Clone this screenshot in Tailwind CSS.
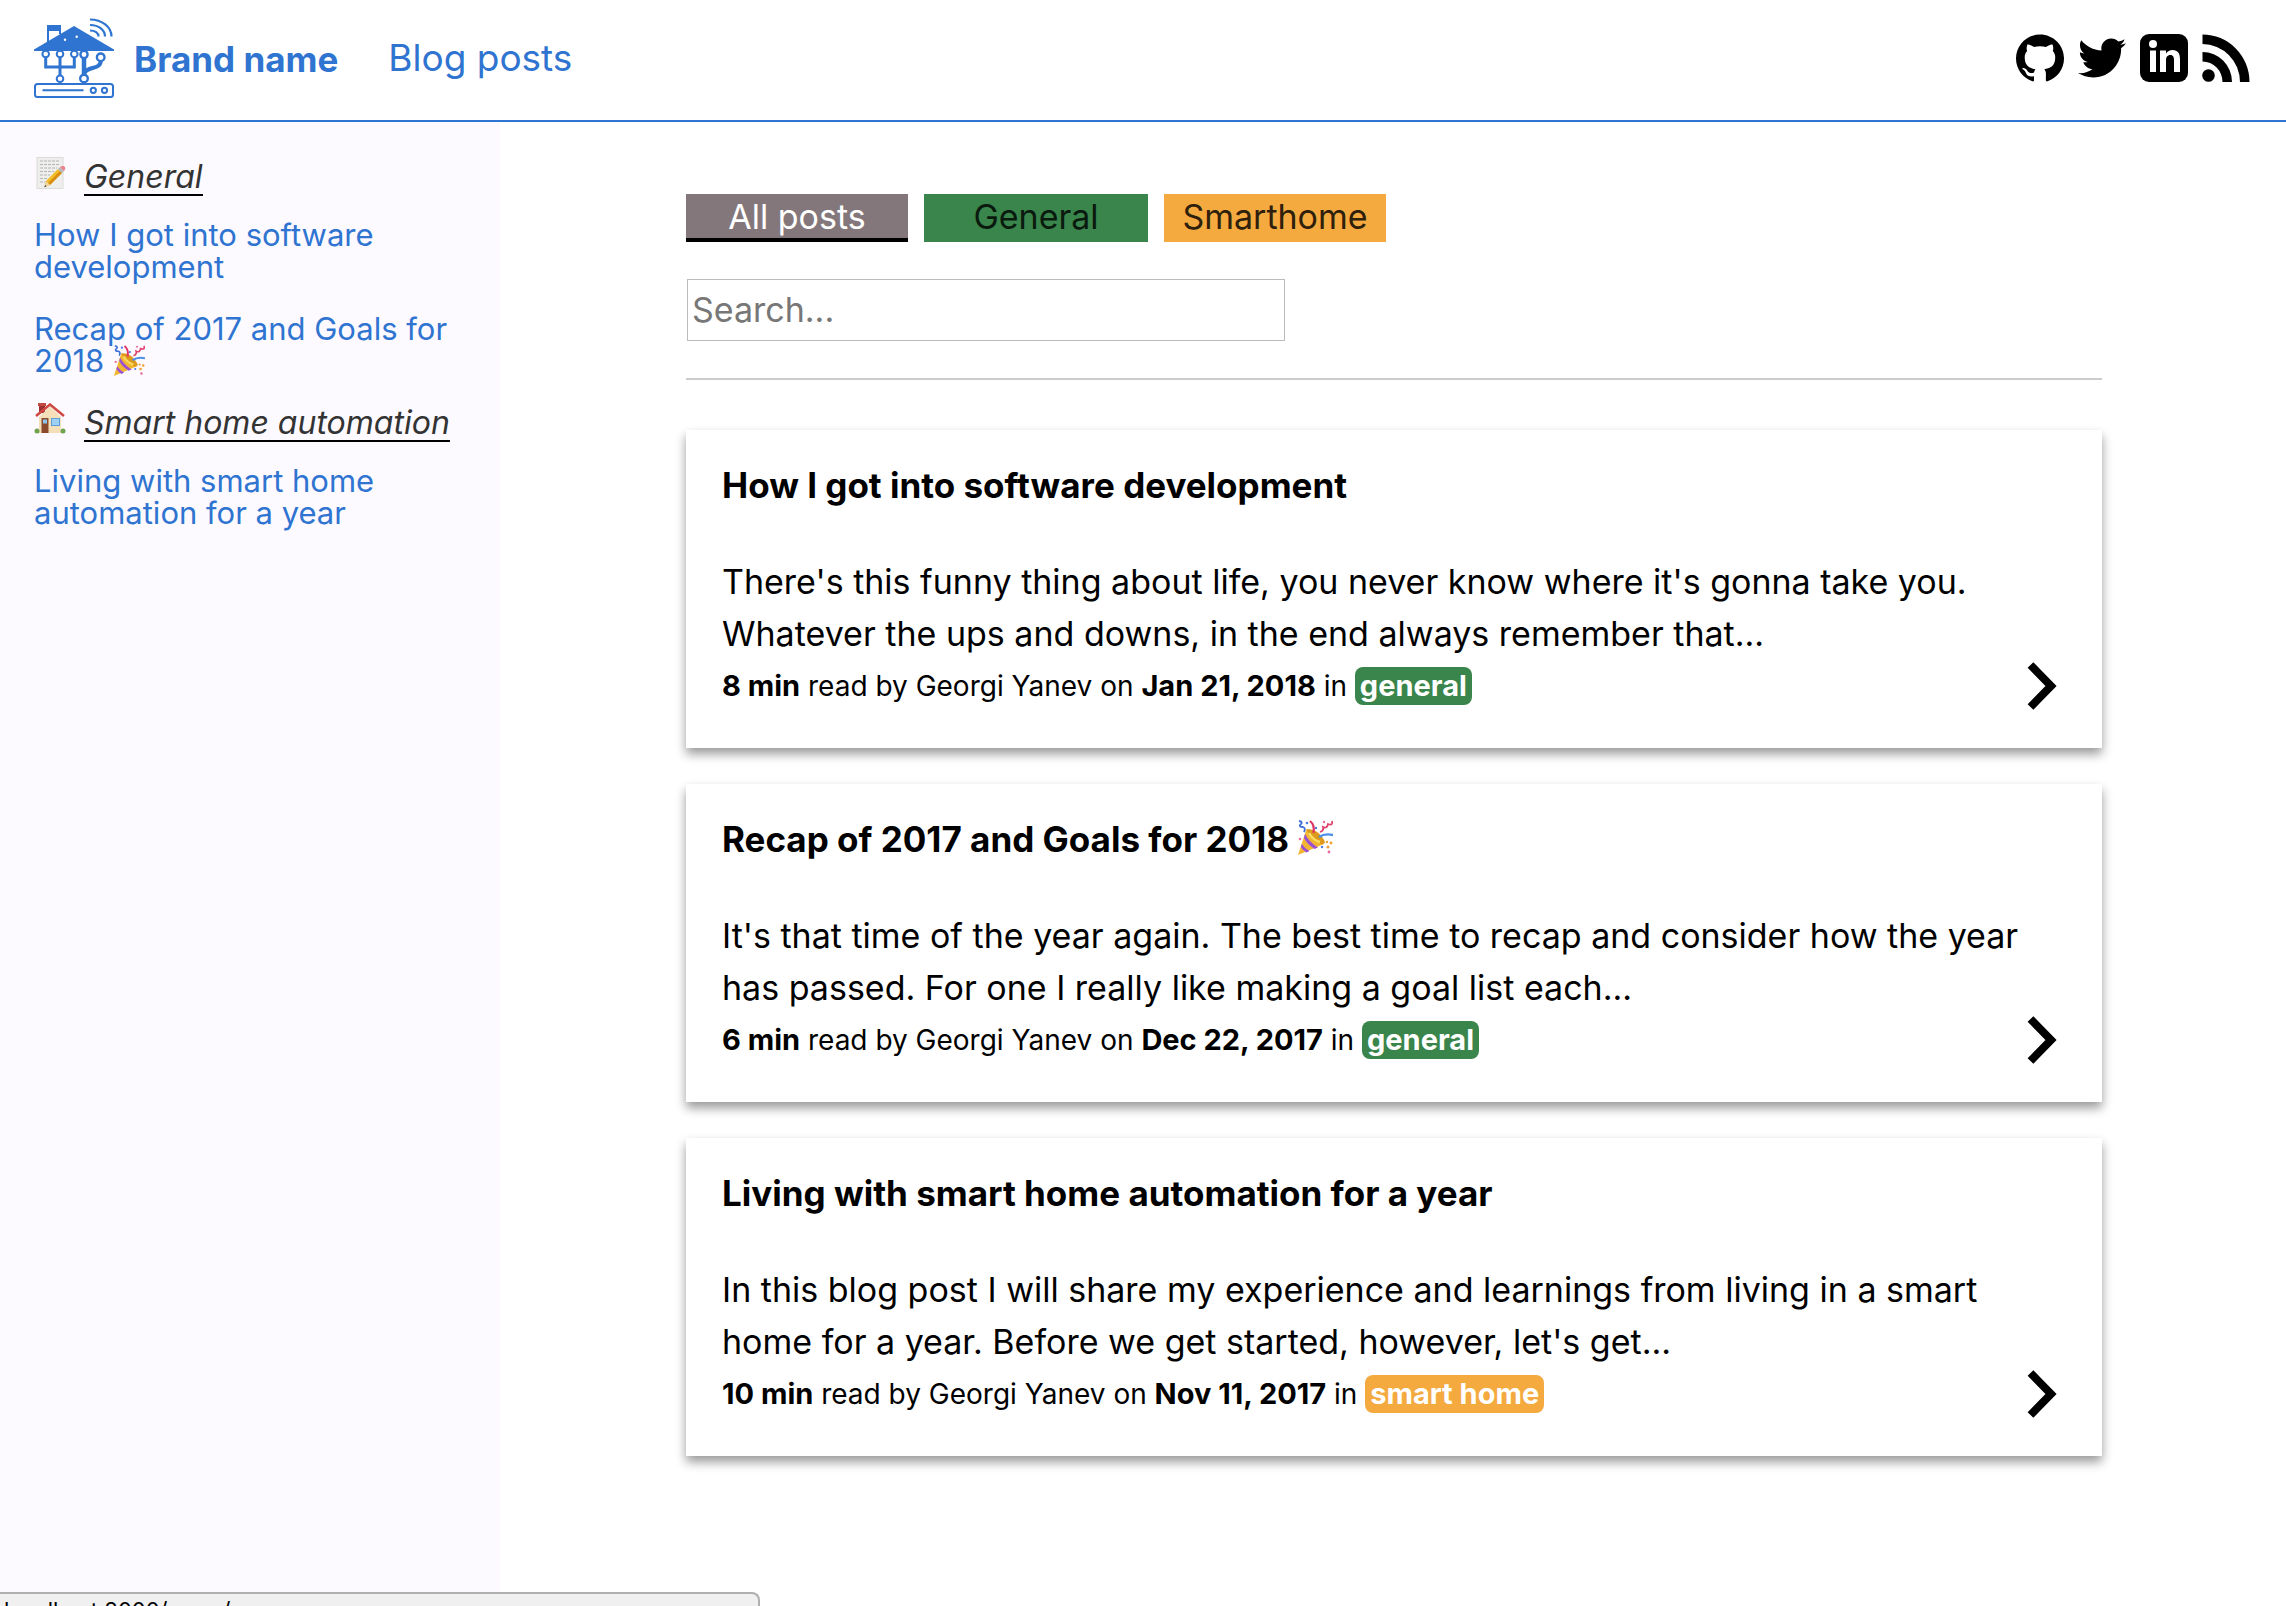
<!DOCTYPE html>
<html lang="en">
<head>
<meta charset="utf-8">
<meta name="viewport" content="width=device-width, initial-scale=1">
<title>Blog posts</title>
<script src="https://cdn.jsdelivr.net/npm/@tailwindcss/browser@4"></script>
</head>
<body class="flex min-h-screen flex-col bg-white font-[Inter,sans-serif] text-black">

<!-- Shared drawings -->
<svg class="hidden" aria-hidden="true">
  <symbol id="chevron" viewBox="0 0 30 48">
    <path d="M3.500 3 L24 24 L3.500 45" fill="none" stroke="#000" stroke-width="8"/>
  </symbol>
  <symbol id="party" viewBox="0 0 36 36">
    <path d="M1 35 L9.500 9 Q20 13 27 24 Z" fill="#f2b632"/>
    <path d="M9.500 9 Q22 9 28 22 Q27 25 24 24 Q13 19 9.500 9Z" fill="#dd9a1c"/>
    <path d="M8 14 Q12 22 21 27.500 L17.500 29 Q10 24 7 18Z M4.800 24 Q8 29 12.500 31 L9.500 32.500 Q6 30.500 3.800 27Z" fill="#9b51d4"/>
    <path d="M12 13 Q16 20 23 22" fill="none" stroke="#f9dc62" stroke-width="2.500"/>
    <path d="M2 1 Q7 2 3 5 Q2 7 6 7 Q9 8 7 12" fill="none" stroke="#3c6fd8" stroke-width="1.800"/>
    <path d="M13 1 Q18 5 16.500 13" fill="none" stroke="#e0335f" stroke-width="2.200"/>
    <path d="M35 1 Q36 6 31 4 Q30 9 26 7 Q27 11 23 12" fill="none" stroke="#e0426c" stroke-width="1.800"/>
    <path d="M22 17 Q28 13 36 15" fill="none" stroke="#4b8fe8" stroke-width="2.400"/>
    <g fill="#4b7be0"><circle cx="10" cy="3" r="1.300"/><circle cx="19" cy="8" r="1.200"/><circle cx="25" cy="27" r="1.200"/></g>
    <g fill="#f0a030"><circle cx="30" cy="22" r="1.200"/><circle cx="34" cy="23" r="1.400"/><circle cx="31" cy="27" r="1.500"/></g>
    <g fill="#ea6a9a"><circle cx="3" cy="19" r="1.300"/><circle cx="32" cy="32" r="1.400"/><circle cx="27" cy="2" r="1.200"/></g>
  </symbol>
</svg>

<header class="flex items-center border-b-2 border-[#2f74d0] pt-[18px] pr-9 pb-[22px] pl-[34px] text-[#2f74d0]">
  <a href="#" class="flex items-center gap-5">
    <svg class="size-20" viewBox="0 0 80 80" fill="none" stroke="#2f74d0" aria-hidden="true">
      <path d="M40 8 L80 31.500 V33 H0 V31.500Z" fill="#2f74d0" stroke="none"/>
      <path d="M14 24 V8 H26 V16" stroke-width="2"/>
      <path d="M13 7 H27 V13 H13Z" fill="#2f74d0" stroke="none"/>
      <path d="M56 1.500 C68 1.500 77.500 9 77.500 18.500 M56 7 C65 7 71 12 71 18.500 M56 12.500 C61 12.500 64.500 15 64.500 18.500" stroke-width="2.200"/>
      <circle cx="31" cy="21.700" r="1.200" fill="#fff" stroke="none"/>
      <circle cx="42.700" cy="18.700" r="1.200" fill="#fff" stroke="none"/>
      <path d="M11.700 39 V49 H40.300 V39 M26 39 V57" stroke-width="3"/>
      <path d="M50 40 V57" stroke-width="4.500"/>
      <path d="M66.700 43 C66.700 52 52 48 50 56" stroke-width="4"/>
      <g fill="#fff" stroke-width="2">
        <circle cx="11.700" cy="36" r="3.300"/><circle cx="26" cy="36" r="3.300"/><circle cx="40.300" cy="36" r="3.300"/>
        <circle cx="26" cy="60.700" r="3.300"/>
      </g>
      <g fill="#fff" stroke-width="2.400">
        <circle cx="50" cy="36.500" r="3.600"/><circle cx="66.700" cy="39.300" r="3.800"/><circle cx="50" cy="60.500" r="3.800"/>
      </g>
      <rect x="1" y="66" width="78" height="13" rx="2.500" stroke-width="2"/>
      <path d="M8.500 72.300 H49.500" stroke-width="2"/>
      <circle cx="59.300" cy="72.300" r="2.600" stroke-width="2"/><circle cx="70.500" cy="72.300" r="2.600" stroke-width="2"/>
    </svg>
    <span class="pt-0.5 text-[35px] leading-[52px] font-bold">Brand name</span>
  </a>
  <nav class="ml-[50px]">
    <a href="#" class="text-[37px] leading-[52px]">Blog posts</a>
  </nav>
  <div class="ml-auto flex gap-3.5">
    <a href="#" aria-label="GitHub"><svg class="size-12" viewBox="0 0 24 24"><path d="M12 .297c-6.630 0-12 5.373-12 12 0 5.303 3.438 9.800 8.205 11.385.600.113.820-.258.820-.577 0-.285-.010-1.040-.015-2.040-3.338.724-4.042-1.610-4.042-1.610C4.422 18.070 3.633 17.700 3.633 17.700c-1.087-.744.084-.729.084-.729 1.205.084 1.838 1.236 1.838 1.236 1.070 1.835 2.809 1.305 3.495.998.108-.776.417-1.305.760-1.605-2.665-.300-5.466-1.332-5.466-5.930 0-1.310.465-2.380 1.235-3.220-.135-.303-.540-1.523.105-3.176 0 0 1.005-.322 3.300 1.230.960-.267 1.980-.399 3-.405 1.020.006 2.040.138 3 .405 2.280-1.552 3.285-1.230 3.285-1.230.645 1.653.240 2.873.120 3.176.765.840 1.230 1.910 1.230 3.220 0 4.610-2.805 5.625-5.475 5.920.420.360.810 1.096.810 2.220 0 1.606-.015 2.896-.015 3.286 0 .315.210.690.825.570C20.565 22.092 24 17.592 24 12.297c0-6.627-5.373-12-12-12"/></svg></a>
    <a href="#" aria-label="Twitter"><svg class="size-12" viewBox="0 0 24 24"><path d="M23.954 4.569c-.885.389-1.830.654-2.825.775 1.014-.611 1.794-1.574 2.163-2.723-.951.555-2.005.959-3.127 1.184-.896-.959-2.173-1.559-3.591-1.559-2.717 0-4.920 2.203-4.920 4.917 0 .390.045.765.127 1.124C7.691 8.094 4.066 6.130 1.640 3.161c-.427.722-.666 1.561-.666 2.475 0 1.710.870 3.213 2.188 4.096-.807-.026-1.566-.248-2.228-.616v.061c0 2.385 1.693 4.374 3.946 4.827-.413.111-.849.171-1.296.171-.314 0-.615-.030-.916-.086.631 1.953 2.445 3.377 4.604 3.417-1.680 1.319-3.809 2.105-6.102 2.105-.390 0-.779-.023-1.170-.067 2.189 1.394 4.768 2.209 7.557 2.209 9.054 0 13.999-7.496 13.999-13.986 0-.209 0-.420-.015-.630.961-.689 1.800-1.560 2.460-2.548l-.047-.020z"/></svg></a>
    <a href="#" aria-label="LinkedIn"><svg class="size-12" viewBox="0 0 48 48"><rect width="48" height="48" rx="9"/><g fill="#fff"><circle cx="13" cy="10" r="4"/><path d="M10 16.500h6V38h-6z M20 16.500h6v3c1.500-2.300 3.700-3.600 6.500-3.600 5.500 0 7.500 3.600 7.500 9.100v13h-6V26.500c0-3.200-.700-5.500-3.600-5.500-3.200 0-4.400 2.300-4.400 5.500V38h-6z"/></g></svg></a>
    <a href="#" aria-label="RSS feed"><svg class="size-12" viewBox="0 0 48 48"><circle cx="6.500" cy="41.500" r="6.300"/><path d="M0.500 0.500 A47 47.500 0 0 1 47.500 48 H38 A37.500 38 0 0 0 0.500 10 Z M0.500 18 A29.500 30 0 0 1 30 48 H20.500 A20 20.500 0 0 0 0.500 27.500 Z"/></svg></a>
  </div>
</header>

<div class="flex flex-1">
  <aside class="w-[500px] shrink-0 bg-[#fcfaff] pt-[39px] pr-9 pl-[34px] text-[31px] leading-8">
    <section>
      <h2 class="mb-[23px] flex items-start text-[32px] leading-8 text-[#333]">
        <svg class="-mt-1 mr-[18px] size-8" viewBox="0 0 32 32" aria-hidden="true">
          <rect x="3" y="0.500" width="26" height="31" fill="#eeeeec" stroke="#dcdcda"/>
          <path d="M6 4h20M6 7.500h19M6 11h17M6 14.500h14M6 18h10M6 21.500h7M6 25h6" stroke="#b5b5b5" stroke-dasharray="3 1"/>
          <path d="M12 24 L24 12 L28 16 L16 28 L10.500 30Z" fill="#f3bd28"/>
          <path d="M14 26 L26 14 L28 16 L16 28Z" fill="#d78e12"/>
          <path d="M12 24 L16 28 L10.500 30Z" fill="#efd3a0"/><path d="M11.200 28 L12.500 29.300 L10.300 30.200Z" fill="#333"/>
          <path d="M24 12 L26 10 L30 14 L28 16Z" fill="#b5b9bd"/><path d="M26 10 Q29 8 31 10 Q32 12 30 14Z" fill="#ee7f8b"/>
        </svg>
        <em class="border-b-2 border-black pb-px">General</em>
      </h2>
      <ul class="text-[#2f74d0]">
        <li class="mb-[30px]"><a href="#">How I got into software development</a></li>
        <li class="mb-[30px]"><a href="#">Recap of 2017 and Goals for 2018 <svg class="-my-1 inline size-8 align-[-1px]" aria-hidden="true"><use href="#party"/></svg></a></li>
      </ul>
    </section>
    <section>
      <h2 class="mb-[23px] flex items-start text-[32px] leading-8 text-[#333]">
        <svg class="-mt-1 mr-[18px] size-8" viewBox="0 0 32 32" aria-hidden="true">
          <path d="M5 1h6v9H5z" fill="#9c3030"/><path d="M4 0h8v3H4z" fill="#c04a42"/>
          <path d="M5 14 L16 3.500 L27 14 V30 H5Z" fill="#f4dfb8"/>
          <path d="M2 13 L16 1.500 L30 13" fill="none" stroke="#cf4740" stroke-width="2.500"/>
          <path d="M7.500 15h7v15h-7z" fill="#8a4b2c"/><path d="M9 16.500h4v4H9z" fill="#8ec5ee"/>
          <path d="M17 15h9v8h-9z" fill="#5f9fd8"/><path d="M18 16h7v6h-7z" fill="#9cd0f5"/>
          <circle cx="3" cy="28" r="2.500" fill="#6fa34e"/><circle cx="29" cy="28" r="2.500" fill="#6fa34e"/>
        </svg>
        <em class="border-b-2 border-black pb-px">Smart home automation</em>
      </h2>
      <ul class="text-[#2f74d0]">
        <li><a href="#">Living with smart home automation for a year</a></li>
      </ul>
    </section>
  </aside>

  <main class="flex-1 pl-0.5">
    <div class="mx-auto w-full max-w-[1416px] pt-[72px]">
      <div class="flex gap-4 text-[34px] leading-[42px]">
        <button class="h-12 w-[222px] border-b-4 border-black bg-[#84777b] pt-0.5 text-white">All posts</button>
        <button class="h-12 w-[224px] border-b-4 border-transparent bg-[#39854b] pt-0.5 text-[#0a1a0e]">General</button>
        <button class="h-12 w-[222px] border-b-4 border-transparent bg-[#f4aa3f] pt-0.5 text-[#2e200b]">Smarthome</button>
      </div>
      <input type="search" aria-label="Search posts" placeholder="Search..." class="mx-px mt-[37px] block h-[62px] w-[598px] border border-[#bbb] px-1 pb-0.5 text-[34px] placeholder:text-[#777]">
      <hr class="mt-[37px] mb-[50px] border-t-2 border-[#ccc]">

      <div class="flex flex-col gap-9 text-[34px] leading-[52px]">
        <article class="px-9 pt-[29px] pb-9 shadow-[0_6px_10px_rgba(0,0,0,0.4)]">
          <h2 class="mb-[45px] text-[35px] leading-[52px] font-bold">How I got into software development</h2>
          <p>There's this funny thing about life, you never know where it's gonna take you. Whatever the ups and downs, in the end always remember that...</p>
          <div class="flex items-center justify-between text-[28px]">
            <p class="h-[52px]"><b class="text-[29px]">8 min</b> read by Georgi Yanev on <b class="text-[29px]">Jan 21, 2018</b> in <a href="#" class="inline-block rounded-lg bg-[#39854b] px-[5px] text-[29px] leading-[38px] font-bold text-white">general</a></p>
            <a href="#" aria-label="Read post" class="mr-[9px]"><svg class="h-12 w-[30px]"><use href="#chevron"/></svg></a>
          </div>
        </article>
        <article class="px-9 pt-[29px] pb-9 shadow-[0_6px_10px_rgba(0,0,0,0.4)]">
          <h2 class="mb-[45px] text-[35px] leading-[52px] font-bold">Recap of 2017 and Goals for 2018 <svg class="inline size-9 align-[-4px]" aria-hidden="true"><use href="#party"/></svg></h2>
          <p>It's that time of the year again. The best time to recap and consider how the year has passed. For one I really like making a goal list each...</p>
          <div class="flex items-center justify-between text-[28px]">
            <p class="h-[52px]"><b class="text-[29px]">6 min</b> read by Georgi Yanev on <b class="text-[29px]">Dec 22, 2017</b> in <a href="#" class="inline-block rounded-lg bg-[#39854b] px-[5px] text-[29px] leading-[38px] font-bold text-white">general</a></p>
            <a href="#" aria-label="Read post" class="mr-[9px]"><svg class="h-12 w-[30px]"><use href="#chevron"/></svg></a>
          </div>
        </article>
        <article class="px-9 pt-[29px] pb-9 shadow-[0_6px_10px_rgba(0,0,0,0.4)]">
          <h2 class="mb-[45px] text-[35px] leading-[52px] font-bold">Living with smart home automation for a year</h2>
          <p>In this blog post I will share my experience and learnings from living in a smart home for a year. Before we get started, however, let's get...</p>
          <div class="flex items-center justify-between text-[28px]">
            <p class="h-[52px]"><b class="text-[29px]">10 min</b> read by Georgi Yanev on <b class="text-[29px]">Nov 11, 2017</b> in <a href="#" class="inline-block rounded-lg bg-[#f4aa3f] px-[5px] text-[29px] leading-[38px] font-bold text-white">smart home</a></p>
            <a href="#" aria-label="Read post" class="mr-[9px]"><svg class="h-12 w-[30px]"><use href="#chevron"/></svg></a>
          </div>
        </article>
      </div>
    </div>
  </main>
</div>

<!-- Link address shown at the foot of the window -->
<div class="fixed bottom-0 left-0 h-3.5 w-[760px] overflow-hidden rounded-tr-lg border-t-2 border-r-2 border-[#b0b0b0] bg-[#f0f0f0] pl-1 text-[22px] leading-[32px]">localhost:8000/news/</div>
</body>
</html>
